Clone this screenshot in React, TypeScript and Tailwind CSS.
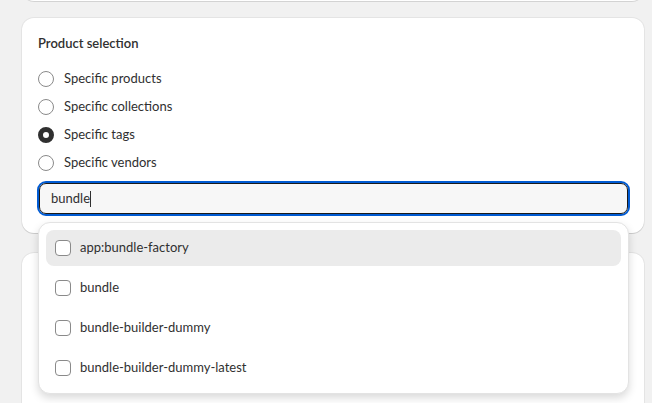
import { useState } from 'react';

const options = ['Specific products', 'Specific collections', 'Specific tags', 'Specific vendors'];
const tags = ['app:bundle-factory', 'bundle', 'bundle-builder-dummy', 'bundle-builder-dummy-latest'];

function Radio({ checked }: { checked: boolean }) {
  return checked ? (
    <span className="w-4 h-4 rounded-full border-[5px] border-[#303030] bg-white shrink-0" />
  ) : (
    <span className="w-4 h-4 rounded-full border border-[#8a8a8a] bg-white shrink-0" />
  );
}

export default function App() {
  const [selected, setSelected] = useState(2);
  const query = 'bundle';

  return (
    <div
      className="w-[652px] h-[403px] overflow-hidden bg-[#f1f1f1] text-[#303030] text-[13px]"
      style={{ fontFamily: '"Segoe UI", "Lato", "Liberation Sans", sans-serif' }}
    >
      <div className="pl-[22px] pr-[8px] flex flex-col gap-[20px]">
        <div className="h-[20px] -mt-[19px] -mb-[3px] bg-white rounded-b-xl shadow-[0_1px_0_rgba(0,0,0,0.12)]" />

        <div className="relative bg-white rounded-xl shadow-[0_1px_0_rgba(0,0,0,0.1),0_0_0_1px_rgba(0,0,0,0.05)] pl-4 pr-[14px] pt-[15px] pb-[17px]">
          <h2 className="font-semibold leading-5 mb-[16px]">Product selection</h2>
          <div className="flex flex-col gap-2">
            {options.map((o, i) => (
              <label key={o} className="flex items-center gap-[10px] h-5 cursor-pointer" onClick={() => setSelected(i)}>
                <Radio checked={selected === i} />
                <span>{o}</span>
              </label>
            ))}
          </div>
          <div className="mt-[8px] -ml-[1px] rounded-[9px] border-2 border-[#005bd3]">
            <div className="rounded-[7px] border border-[#1a1a1a] bg-[#f7f7f7] h-[31px] flex items-center px-[11px]">
              <span>{query}</span>
              <span className="w-px h-[16px] bg-[#303030]" />
            </div>
          </div>

          <div className="absolute left-[16px] right-[15px] top-[204px] z-10 bg-white rounded-xl border border-[#e3e3e3] shadow-[0_4px_8px_rgba(0,0,0,0.15)] p-[7px] flex flex-col gap-1">
            {tags.map((t, i) => (
              <div
                key={t}
                className={`flex items-center gap-[9px] h-[36px] px-[9px] rounded-lg ${i === 0 ? 'bg-[#ebebeb]' : ''}`}
              >
                <span className="w-4 h-4 rounded-[4px] border border-[#8a8a8a] bg-white shrink-0" />
                <span>{t}</span>
              </div>
            ))}
          </div>
        </div>

        <div className="h-[200px] bg-white rounded-xl shadow-[0_1px_0_rgba(0,0,0,0.1),0_0_0_1px_rgba(0,0,0,0.05)]" />
      </div>
    </div>
  );
}
